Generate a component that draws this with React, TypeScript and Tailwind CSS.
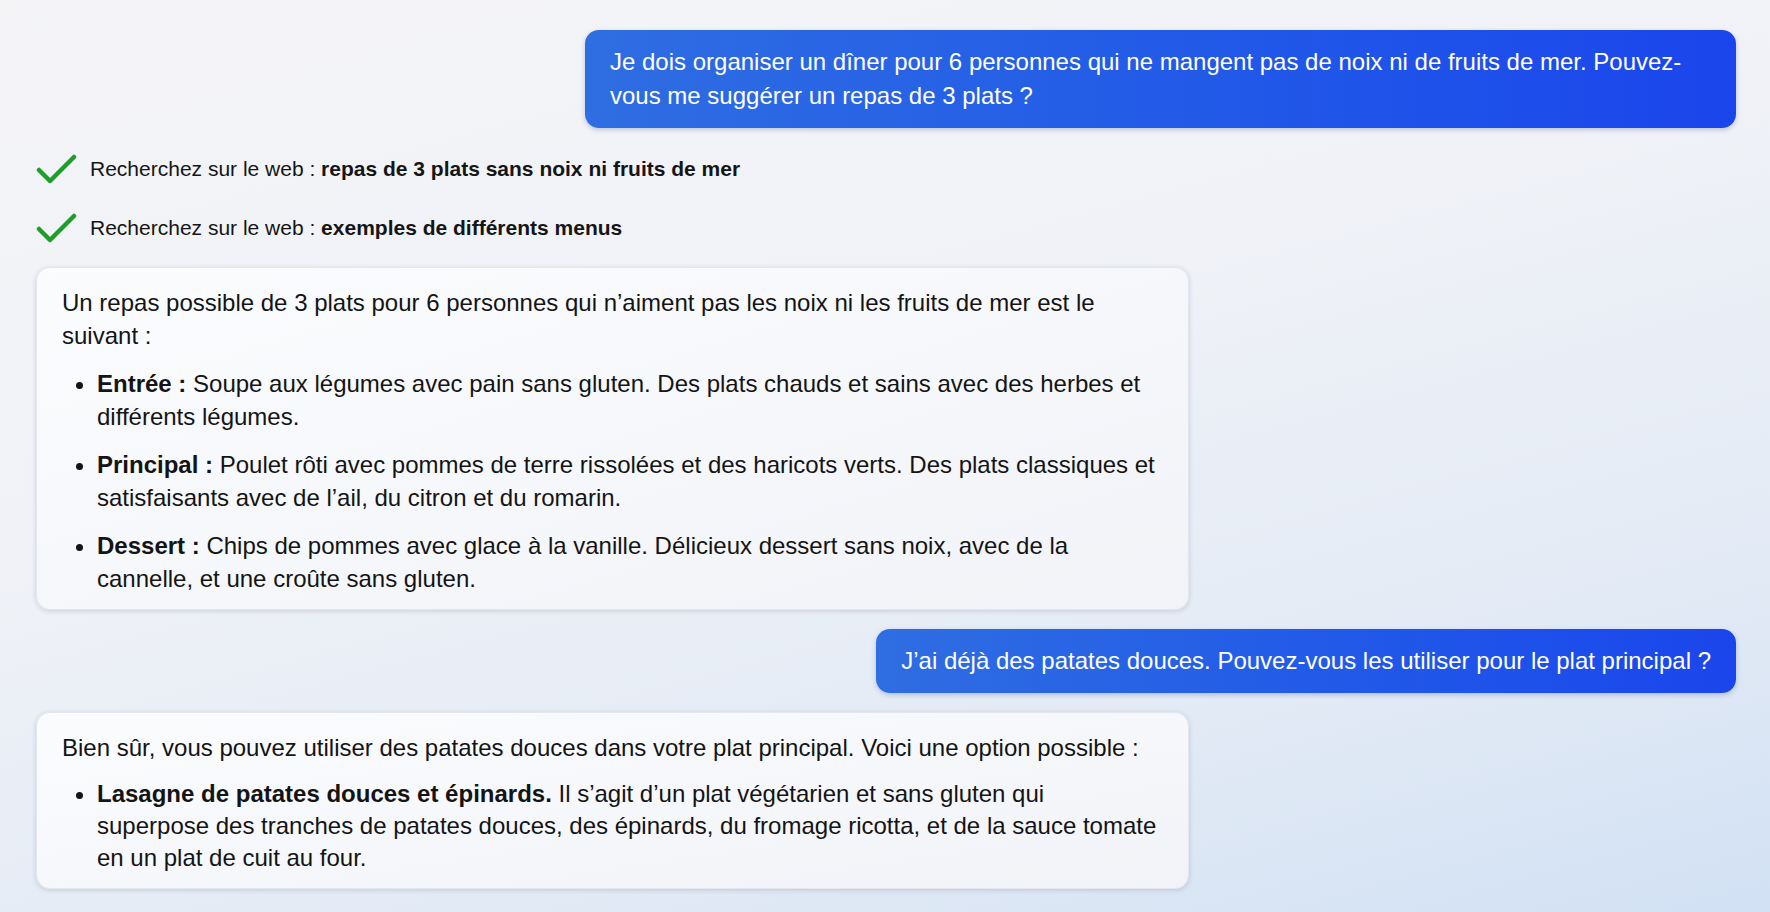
import React from 'react'

type Item = { label: string; text: string }

const MENU: Item[] = [
  {
    label: 'Entrée\u00a0:',
    text: 'Soupe aux légumes avec pain sans gluten. Des plats chauds et sains avec des herbes et différents légumes.',
  },
  {
    label: 'Principal\u00a0:',
    text: 'Poulet rôti avec pommes de terre rissolées et des haricots verts. Des plats classiques et satisfaisants avec de l’ail, du citron et du romarin.',
  },
  {
    label: 'Dessert\u00a0:',
    text: 'Chips de pommes avec glace à la vanille. Délicieux dessert sans noix, avec de la cannelle, et une croûte sans gluten.',
  },
]

function UserBubble({ children }: { children: React.ReactNode }) {
  return (
    <div className="self-end max-w-[1151px] rounded-[14px] bg-linear-to-r from-[#2f6de2] to-[#1b45ec] px-[25px] py-[15px] text-[24px] leading-[34px] text-white shadow-[0_2px_5px_rgba(30,60,140,0.25)]">
      {children}
    </div>
  )
}

function BotBubble({ children }: { children: React.ReactNode }) {
  return (
    <div className="w-[1153px] rounded-[14px] border border-[#e3e6ec] bg-linear-to-br from-[#fbfcfe] to-[#f1f3f8] pl-[25px] pr-[26px] pt-[18px] pb-[14px] text-[24px] leading-[33px] text-[#141414] shadow-[0_1px_5px_rgba(40,50,80,0.18)]">
      {children}
    </div>
  )
}

function Check() {
  return (
    <svg width="42" height="30" viewBox="0 0 42 30" className="shrink-0">
      <path d="M3 16 L14 27 L38 3" fill="none" stroke="#1f9d2b" strokeWidth="4.5" strokeLinecap="round" strokeLinejoin="round" />
    </svg>
  )
}

function SearchStep({ query }: { query: string }) {
  return (
    <div className="flex h-[30px] items-center gap-[12px] text-[21px] leading-[24px] text-[#151515]">
      <Check />
      <span>
        Recherchez sur le web&nbsp;: <b className="font-bold">{query}</b>
      </span>
    </div>
  )
}

export default function App() {
  return (
    <div
      className="min-h-screen w-full overflow-hidden bg-[linear-gradient(165deg,#f4f4f7_0%,#f0f2f7_40%,#e2eaf5_75%,#d2e1f4_100%)]"
      style={{ fontFamily: '"Liberation Sans", Arial, sans-serif' }}
    >
      <div className="flex flex-col pl-[36px] pr-[34px] pt-[30px]">
        <UserBubble>
          Je dois organiser un dîner pour 6 personnes qui ne mangent pas de noix ni de fruits de mer. Pouvez-vous me
          suggérer un repas de 3 plats&nbsp;?
        </UserBubble>

        <div className="mt-[26px] flex flex-col gap-[29px]">
          <SearchStep query="repas de 3 plats sans noix ni fruits de mer" />
          <SearchStep query="exemples de différents menus" />
        </div>

        <div className="mt-[24px]">
          <BotBubble>
            <p>
              Un repas possible de 3 plats pour 6 personnes qui n’aiment pas les noix ni les fruits de mer est le
              suivant&nbsp;:
            </p>
            <ul className="mt-[15px] flex list-disc flex-col gap-[15px] pl-[35px]">
              {MENU.map((m) => (
                <li key={m.label}>
                  <b className="font-bold">{m.label}</b> {m.text}
                </li>
              ))}
            </ul>
          </BotBubble>
        </div>

        <div className="mt-[19px] flex flex-col">
          <UserBubble>J’ai déjà des patates douces. Pouvez-vous les utiliser pour le plat principal&nbsp;?</UserBubble>
        </div>

        <div className="mt-[19px]">
          <BotBubble>
            <p>
              Bien sûr, vous pouvez utiliser des patates douces dans votre plat principal. Voici une option
              possible&nbsp;:
            </p>
            <ul className="mt-[14px] list-disc pl-[35px]">
              <li className="leading-[32px]">
                <b className="font-bold">Lasagne de patates douces et épinards.</b> Il s’agit d’un plat végétarien et
                sans gluten qui superpose des tranches de patates douces, des épinards, du fromage ricotta, et de la
                sauce tomate en un plat de cuit au four.
              </li>
            </ul>
          </BotBubble>
        </div>
      </div>
    </div>
  )
}
